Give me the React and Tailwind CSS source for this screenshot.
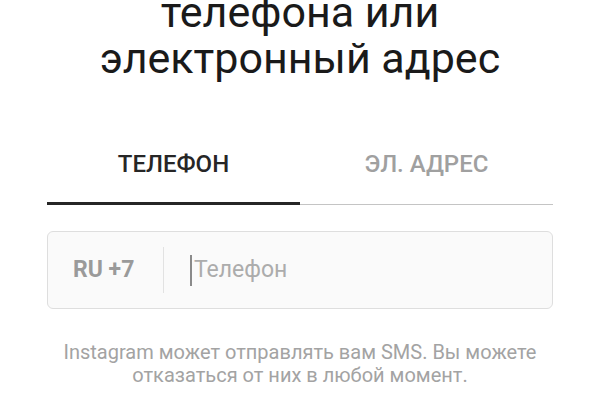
import React from 'react';

const App = () => {
    return (
        <div className="w-[600px] h-[400px] overflow-hidden bg-white" style={{ fontFamily: 'Roboto, "Noto Sans", sans-serif' }}>
            <div className="-mt-[11px] text-center text-[43px] leading-[46px] text-[#1a1a1a]">
                <p>телефона или</p>
                <p>электронный адрес</p>
            </div>

            <div className="mx-[47px] mt-[71px] flex">
                <div className="flex-1 flex flex-col items-center">
                    <span className="text-[24px] leading-[24px] font-medium text-[#262626]">ТЕЛЕФОН</span>
                    <div className="mt-[26px] w-full h-[3px] bg-[#262626]"></div>
                </div>
                <div className="flex-1 flex flex-col items-center">
                    <span className="text-[24px] leading-[24px] font-medium text-[#a0a0a0]">ЭЛ. АДРЕС</span>
                    <div className="mt-[28px] w-full h-px bg-[#c4c4c4]"></div>
                </div>
            </div>

            <div className="mx-[47px] mt-[26px] h-[78px] rounded-md border border-[#dedede] bg-[#fafafa] flex items-center">
                <span className="pl-[25px] w-[115px] text-[23px] font-bold text-[#9a9a9a]">RU +7</span>
                <div className="h-[46px] w-px bg-[#e2e2e2]"></div>
                <div className="ml-[26px] flex items-center">
                    <div className="h-[31px] w-[2px] bg-[#8a8a8a]"></div>
                    <span className="ml-[2px] text-[23px] text-[#acacac]">Телефон</span>
                </div>
            </div>

            <div className="mt-[32px] text-center text-[20px] leading-[23px] text-[#a3a3a3]">
                <p>Instagram может отправлять вам SMS. Вы можете</p>
                <p>отказаться от них в любой момент.</p>
            </div>
        </div>
    );
};

export default App;
